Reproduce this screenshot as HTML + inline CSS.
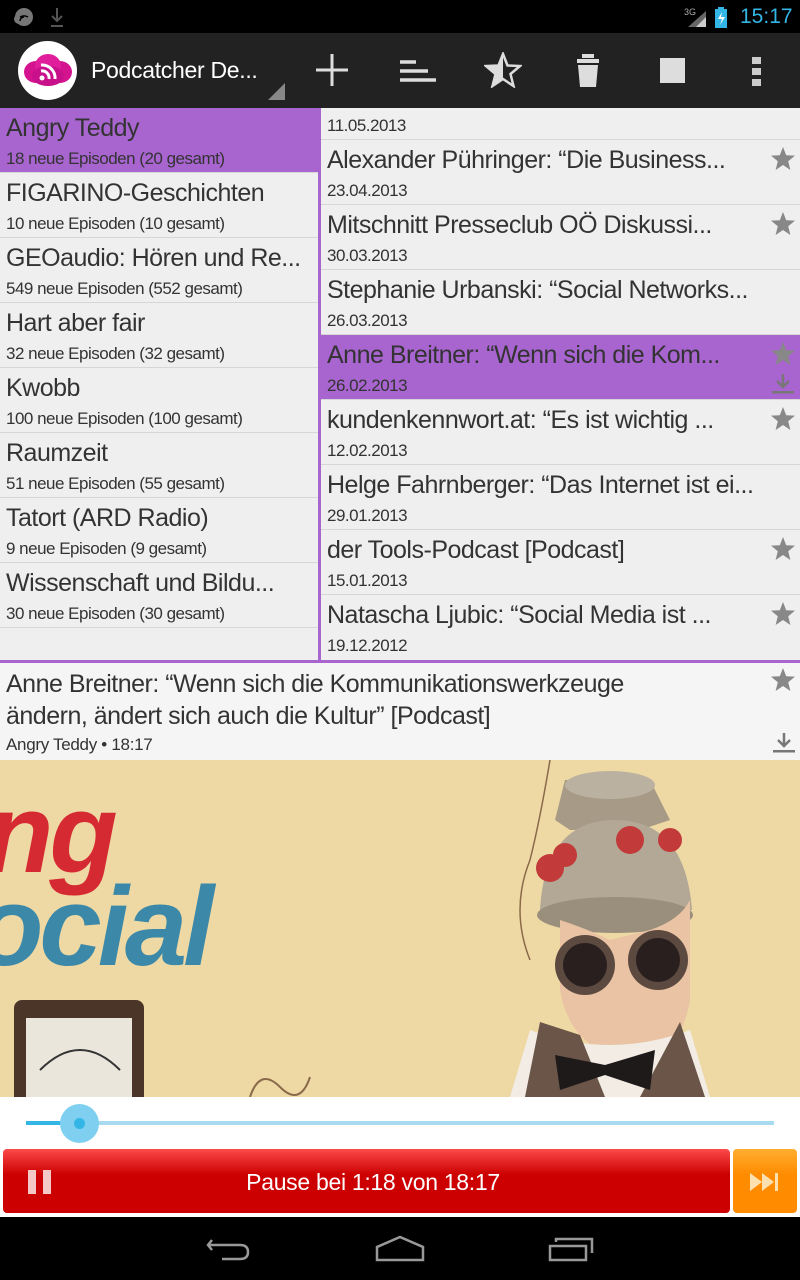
<!DOCTYPE html>
<html><head><meta charset="utf-8"><style>
*{margin:0;padding:0;box-sizing:border-box}
body{width:800px;height:1280px;overflow:hidden;background:#f0f0f0;font-family:"Liberation Sans",sans-serif;position:relative;color:#333}
.a{position:absolute}
.t{position:absolute;white-space:nowrap;overflow:hidden;text-overflow:ellipsis;letter-spacing:-0.5px}
.row{position:absolute;left:0;height:65px;border-bottom:1px solid #d6d6d6;background:#efefef}
.row .ti{left:6px;top:6px;font-size:25px;width:310px}
.row .su{left:6px;top:41px;font-size:17px;width:310px}
.er{position:absolute;left:321px;width:479px;height:65px;border-bottom:1px solid #d6d6d6;background:#efefef}
.er .ti{left:6px;top:6px;font-size:25px;width:438px}
.er .su{left:6px;top:41px;font-size:17px}
.star{position:absolute;right:4px;top:6px}
.sel{background:#a864cf!important}
</style></head><body>
<!-- status bar -->
<div class="a" style="left:0;top:0;width:800px;height:33px;background:#000"></div>
<svg class="a" style="left:10px;top:6px" width="60" height="24"><circle cx="14" cy="11" r="9" fill="#777"/><circle cx="9" cy="13" r="5" fill="#777"/><path d="M10 15 a4 4 0 0 1 4-4 M10 11 a8 8 0 0 1 8 0" stroke="#000" stroke-width="1.5" fill="none"/><path d="M47 2v12 M42 10l5 5 5-5 M41 20h12" stroke="#555" stroke-width="2" fill="none"/></svg>
<svg class="a" style="left:684px;top:5px" width="50" height="24"><text x="0" y="10" font-size="9" fill="#aaa" font-family="Liberation Sans">3G</text><path d="M4 22 L22 6 L22 22Z" fill="#666"/><path d="M12 22 L22 12 L22 22Z" fill="#ccc"/><rect x="31" y="4" width="12" height="19" fill="#33b5e5"/><rect x="34" y="2" width="6" height="3" fill="#33b5e5"/><path d="M38 7l-4 7h4l-2 6 5-8h-4z" fill="#fff"/></svg>
<div class="a" style="left:740px;top:5px;font-size:21px;color:#33b5e5">15:17</div>
<!-- action bar -->
<div class="a" style="left:0;top:33px;width:800px;height:75px;background:#222"></div>
<div class="a" style="left:18px;top:41px;width:59px;height:59px;border-radius:50%;background:#fff"></div>
<svg class="a" style="left:22px;top:52px" width="52" height="36"><ellipse cx="14" cy="20" rx="12" ry="11" fill="#d4148f"/><ellipse cx="38" cy="20" rx="12" ry="11" fill="#d4148f"/><ellipse cx="26" cy="14" rx="13" ry="12" fill="#e01e9b"/><ellipse cx="26" cy="24" rx="16" ry="10" fill="#c8108a"/><circle cx="20" cy="26" r="2.5" fill="#fff"/><path d="M19 19a7 7 0 0 1 8 8 M19 13a13 13 0 0 1 14 14" stroke="#fff" stroke-width="3" fill="none"/></svg>
<div class="a" style="left:91px;top:57px;font-size:23px;color:#fff;letter-spacing:-0.3px">Podcatcher De...</div>
<svg class="a" style="left:268px;top:83px" width="18" height="18"><path d="M17 0V17H0Z" fill="#888"/></svg>
<svg class="a" style="left:314px;top:52px" width="36" height="36"><path d="M18 2v32M2 18h32" stroke="#ddd" stroke-width="3"/></svg>
<svg class="a" style="left:398px;top:58px" width="40" height="26"><path d="M2 4h16M2 13h28M2 22h36" stroke="#ddd" stroke-width="3.5"/></svg>
<svg class="a" style="left:484px;top:52px" width="38" height="36"><path d="M19 2 L23.5 13.5 L36 14 L26.5 22 L29.5 34 L19 27 L8.5 34 L11.5 22 L2 14 L14.5 13.5Z" fill="none" stroke="#ddd" stroke-width="2.5"/><path d="M19 2 L14.5 13.5 L2 14 L11.5 22 L8.5 34 L19 27Z" fill="#ddd"/></svg>
<svg class="a" style="left:574px;top:53px" width="28" height="36"><rect x="8" y="1" width="12" height="4" fill="#ddd"/><rect x="3" y="6" width="22" height="4" fill="#ddd"/><path d="M4 12h20l-2 22H6z" fill="#ddd"/></svg>
<div class="a" style="left:660px;top:58px;width:25px;height:25px;background:#ddd"></div>
<svg class="a" style="left:751px;top:57px" width="12" height="30"><rect x="1" y="0" width="9" height="7" fill="#ccc"/><rect x="1" y="11" width="9" height="7" fill="#ccc"/><rect x="1" y="22" width="9" height="7" fill="#ccc"/></svg>
<!-- left list -->
<div class="a" style="left:0;top:108px;width:319px;height:552px;background:#efefef"></div>
<div class="row sel" style="top:108px;width:319px"><div class="t ti">Angry Teddy</div><div class="t su">18 neue Episoden (20 gesamt)</div></div>
<div class="row" style="top:173px;width:319px"><div class="t ti">FIGARINO-Geschichten</div><div class="t su">10 neue Episoden (10 gesamt)</div></div>
<div class="row" style="top:238px;width:319px"><div class="t ti">GEOaudio: Hören und Re...</div><div class="t su">549 neue Episoden (552 gesamt)</div></div>
<div class="row" style="top:303px;width:319px"><div class="t ti">Hart aber fair</div><div class="t su">32 neue Episoden (32 gesamt)</div></div>
<div class="row" style="top:368px;width:319px"><div class="t ti">Kwobb</div><div class="t su">100 neue Episoden (100 gesamt)</div></div>
<div class="row" style="top:433px;width:319px"><div class="t ti">Raumzeit</div><div class="t su">51 neue Episoden (55 gesamt)</div></div>
<div class="row" style="top:498px;width:319px"><div class="t ti">Tatort (ARD Radio)</div><div class="t su">9 neue Episoden (9 gesamt)</div></div>
<div class="row" style="top:563px;width:319px"><div class="t ti">Wissenschaft und Bildu...</div><div class="t su">30 neue Episoden (30 gesamt)</div></div>
<div class="a" style="left:318px;top:108px;width:3px;height:554px;background:#a864cf"></div>
<!-- right list -->
<div class="a" style="left:321px;top:108px;width:479px;height:32px;background:#efefef;border-bottom:1px solid #d6d6d6"></div>
<div class="t" style="left:327px;top:116px;font-size:17px">11.05.2013</div>
<svg width="0" height="0" style="position:absolute"><defs><path id="st" d="M13 1 L16.2 9.2 L25 9.6 L18.2 15.2 L20.4 24 L13 19 L5.6 24 L7.8 15.2 L1 9.6 L9.8 9.2Z" fill="#888"/><g id="dl"><path d="M13 2v12M7 9l6 6 6-6" stroke="#777" stroke-width="2.5" fill="none"/><rect x="2" y="19" width="22" height="2.5" fill="#777"/></g></defs></svg>
<div class="er" style="top:140px"><div class="t ti">Alexander Pühringer: “Die Business...</div><div class="t su">23.04.2013</div><svg class="star" width="26" height="26"><use href="#st"/></svg></div>
<div class="er" style="top:205px"><div class="t ti">Mitschnitt Presseclub OÖ Diskussi...</div><div class="t su">30.03.2013</div><svg class="star" width="26" height="26"><use href="#st"/></svg></div>
<div class="er" style="top:270px"><div class="t ti" style="width:470px">Stephanie Urbanski: “Social Networks...</div><div class="t su">26.03.2013</div></div>
<div class="er sel" style="top:335px"><div class="t ti">Anne Breitner: “Wenn sich die Kom...</div><div class="t su">26.02.2013</div><svg class="star" width="26" height="26"><use href="#st"/></svg><svg class="a" style="right:4px;top:37px" width="26" height="24"><use href="#dl"/></svg></div>
<div class="er" style="top:400px"><div class="t ti">kundenkennwort.at: “Es ist wichtig ...</div><div class="t su">12.02.2013</div><svg class="star" width="26" height="26"><use href="#st"/></svg></div>
<div class="er" style="top:465px"><div class="t ti" style="width:470px">Helge Fahrnberger: “Das Internet ist ei...</div><div class="t su">29.01.2013</div></div>
<div class="er" style="top:530px"><div class="t ti">der Tools-Podcast [Podcast]</div><div class="t su">15.01.2013</div><svg class="star" width="26" height="26"><use href="#st"/></svg></div>
<div class="er" style="top:595px;border:none"><div class="t ti">Natascha Ljubic: “Social Media ist ...</div><div class="t su">19.12.2012</div><svg class="star" width="26" height="26"><use href="#st"/></svg></div>
<div class="a" style="left:0;top:660px;width:800px;height:3px;background:#a864cf"></div>
<!-- detail -->
<div class="a" style="left:0;top:663px;width:800px;height:97px;background:#f5f5f5"></div>
<div class="a" style="left:6px;top:668px;font-size:25px;line-height:32px;width:690px;letter-spacing:-0.5px">Anne Breitner: “Wenn sich die Kommunikationswerkzeuge ändern, ändert sich auch die Kultur” [Podcast]</div>
<div class="a" style="left:6px;top:735px;font-size:17px;letter-spacing:-0.3px">Angry Teddy • 18:17</div>
<svg class="a" style="left:770px;top:667px" width="26" height="26"><use href="#st"/></svg>
<svg class="a" style="left:771px;top:731px" width="26" height="24"><use href="#dl"/></svg>
<!-- image -->
<svg class="a" style="left:0;top:760px" width="800" height="337">
<rect width="800" height="337" fill="#eed9a4"/>
<text x="-15" y="112" font-size="112" font-weight="bold" font-style="italic" fill="#d62a32" font-family="Liberation Sans" letter-spacing="-4">ng</text>
<text x="-25" y="205" font-size="112" font-weight="bold" font-style="italic" fill="#3b88a8" font-family="Liberation Sans" letter-spacing="-4">ocial</text>
<rect x="14" y="240" width="130" height="110" rx="8" fill="#4a3528"/>
<rect x="26" y="258" width="106" height="90" fill="#eae6dc"/>
<path d="M40 310 Q80 270 120 310" stroke="#333" stroke-width="2" fill="none"/>
<path d="M250 337 q10-30 30-10 q20 20 30-10" stroke="#8a6a4a" stroke-width="2" fill="none"/>
<g transform="translate(210,0)">
<path d="M320 200 Q300 150 320 100 Q330 60 340 0" stroke="#8a6a4a" stroke-width="1.5" fill="none"/>
<path d="M355 20 L440 20 L460 60 L430 70 L360 70 L345 60Z" fill="#a79a86"/>
<ellipse cx="400" cy="25" rx="45" ry="14" fill="#bbb1a0"/>
<path d="M330 150 Q335 60 405 60 Q475 60 482 150Z" fill="#b2a895"/>
<ellipse cx="405" cy="155" rx="78" ry="18" fill="#9a8f7c"/>
<circle cx="340" cy="108" r="14" fill="#c23a3a"/><circle cx="355" cy="95" r="12" fill="#c23a3a"/><circle cx="420" cy="80" r="14" fill="#c23a3a"/><circle cx="460" cy="80" r="12" fill="#c23a3a"/>
<path d="M350 160 Q380 170 400 180 L440 170 Q470 160 480 140 L480 240 Q470 300 420 300 Q360 290 350 230Z" fill="#e9c3a4"/>
<circle cx="375" cy="205" r="30" fill="#5c4a40"/><circle cx="375" cy="205" r="22" fill="#2a1f1f"/>
<circle cx="448" cy="200" r="30" fill="#5c4a40"/><circle cx="448" cy="200" r="22" fill="#2a1f1f"/>
<path d="M300 337 L320 270 Q400 300 480 270 L500 337Z" fill="#f2ece4"/>
<path d="M315 337 L330 262 L370 275 L395 337Z M470 262 L495 337 L430 337 Z" fill="#6a5548"/>
<path d="M345 295 L395 305 L445 290 L440 330 L395 315 L350 330Z" fill="#1e1a1a"/>
</g>
</svg>
<!-- player -->
<div class="a" style="left:0;top:1097px;width:800px;height:120px;background:#fff"></div>
<div class="a" style="left:26px;top:1121px;width:748px;height:4px;background:#a8dbef"></div>
<div class="a" style="left:26px;top:1121px;width:54px;height:4px;background:#33b5e5"></div>
<div class="a" style="left:60px;top:1104px;width:39px;height:39px;border-radius:50%;background:#7fd0f0"></div>
<div class="a" style="left:74px;top:1118px;width:11px;height:11px;border-radius:50%;background:#33b5e5"></div>
<div class="a" style="left:3px;top:1149px;width:727px;height:64px;border-radius:4px;background:linear-gradient(#fc4a4a,#cc0000 40%,#cc0000)"></div>
<div class="a" style="left:28px;top:1170px;width:8px;height:24px;background:#f5c8c8"></div>
<div class="a" style="left:43px;top:1170px;width:8px;height:24px;background:#f5c8c8"></div>
<div class="a" style="left:3px;top:1169px;width:740px;text-align:center;color:#fff;font-size:23px;letter-spacing:-0.3px">Pause bei 1:18 von 18:17</div>
<div class="a" style="left:733px;top:1149px;width:64px;height:64px;border-radius:4px;background:linear-gradient(#ffae30,#ff8c00 40%)"></div>
<svg class="a" style="left:749px;top:1171px" width="34" height="22"><path d="M1 2 L13 11 L1 20Z M13 2 L25 11 L13 20Z" fill="#fde0b0"/><rect x="26" y="2" width="3" height="18" fill="#fde0b0"/></svg>
<!-- nav -->
<div class="a" style="left:0;top:1217px;width:800px;height:63px;background:#000"></div>
<svg class="a" style="left:200px;top:1232px" width="400" height="36"><path d="M12 8 L8 13 L12 18 M8 13 H40 Q48 13 48 20 Q48 27 40 27 H22" stroke="#999" stroke-width="2.5" fill="none"/><path d="M177 28 V15 L200 5 L223 15 V28Z" stroke="#999" stroke-width="2.5" fill="none"/><rect x="350" y="14" width="36" height="14" stroke="#999" stroke-width="2.5" fill="none"/><path d="M356 10 V7 H392 V21" stroke="#999" stroke-width="2.5" fill="none"/></svg>
</body></html>
